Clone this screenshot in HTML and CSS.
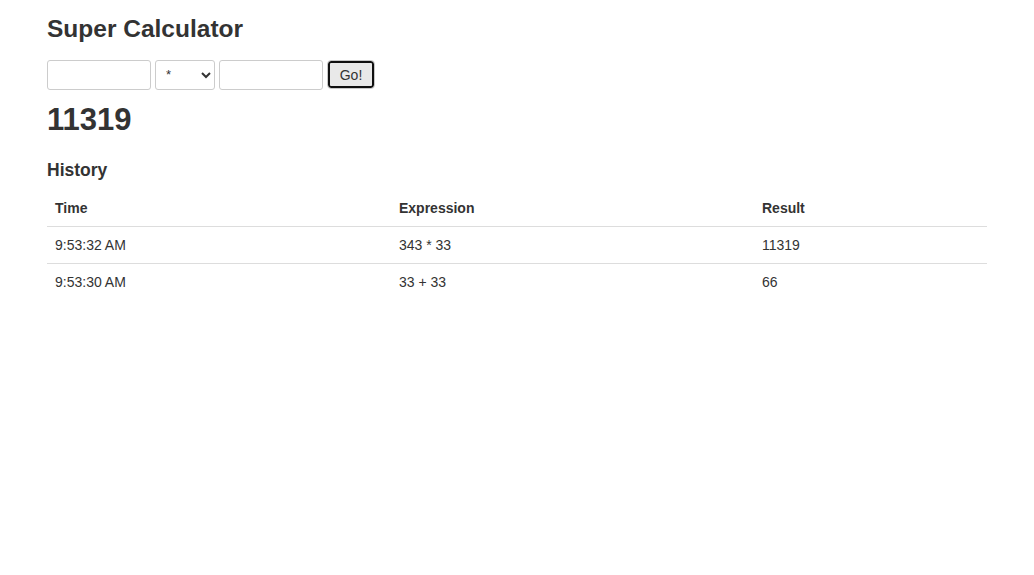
FILE: index.html
```html
<!DOCTYPE html>
<html>
<head>
<meta charset="utf-8">
<title>Super Calculator</title>
<link rel="stylesheet" href="styles.css">
</head>
<body>
<div class="container">
  <h1 class="title">Super Calculator</h1>
  <form class="calc-form">
    <input class="num-input" type="text">
    <select class="op-select">
      <option>*</option>
    </select>
    <input class="num-input" type="text">
    <button class="go-btn" type="button">Go!</button>
  </form>
  <h2 class="result">11319</h2>
  <h4 class="history-title">History</h4>
  <table class="history">
    <thead>
      <tr><th class="col-time">Time</th><th class="col-expr">Expression</th><th>Result</th></tr>
    </thead>
    <tbody>
      <tr><td>9:53:32 AM</td><td>343 * 33</td><td>11319</td></tr>
      <tr><td>9:53:30 AM</td><td>33 + 33</td><td>66</td></tr>
    </tbody>
  </table>
</div>
</body>
</html>
```
FILE: styles.css
```css
html, body {
  margin: 0;
  padding: 0;
  background: #fff;
}
body {
  font-family: "Liberation Sans", Arial, sans-serif;
  font-size: 14px;
  line-height: 1.42857;
  color: #333;
}
.container {
  width: 940px;
  margin: 0 auto;
  padding: 0 15px;
}
.title {
  font-size: 24.5px;
  font-weight: bold;
  line-height: 1.1;
  margin: 16px 0 0;
}
.calc-form {
  display: flex;
  align-items: center;
  gap: 4px;
  margin-top: 17px;
}
.num-input {
  box-sizing: border-box;
  width: 104px;
  height: 30px;
  border: 1px solid #ccc;
  border-radius: 3px;
  padding: 2px 6px;
  font-family: inherit;
  font-size: 14px;
}
.op-select {
  box-sizing: border-box;
  width: 60px;
  height: 30px;
  border: 1px solid #ccc;
  border-radius: 3px;
  padding: 0 6px;
  background: #fff;
  color: #333;
  font-family: inherit;
  font-size: 13px;
}
.go-btn {
  box-sizing: border-box;
  margin-left: 1px;
  height: 27px;
  width: 46px;
  border: 2px solid #101010;
  border-radius: 3px;
  outline: 1px solid #c8c8c8;
  outline-offset: 0;
  background: #e9e9e9;
  color: #333;
  font-family: inherit;
  font-size: 14px;
  padding: 0;
}
.result {
  font-size: 31px;
  font-weight: bold;
  line-height: 1.1;
  margin: 13px 0 0;
}
.history-title {
  font-size: 17.5px;
  font-weight: bold;
  line-height: 1.1;
  margin: 24px 0 0;
}
.history {
  width: 100%;
  border-collapse: collapse;
  border-spacing: 0;
  margin-top: 9px;
}
.history th, .history td {
  text-align: left;
  padding: 8px;
  line-height: 20px;
  vertical-align: top;
}
.history th {
  font-weight: bold;
  border-bottom: 1px solid #ddd;
  padding-top: 9px;
}
.history td {
  border-top: 1px solid #ddd;
}
.col-time { width: 328px; }
.col-expr { width: 347px; }
```
